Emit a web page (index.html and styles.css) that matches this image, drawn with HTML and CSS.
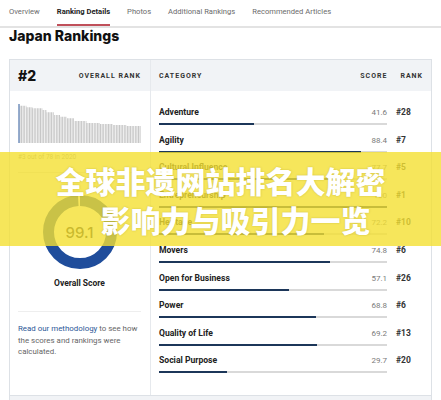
FILE: index.html
```html
<!DOCTYPE html>
<html lang="en">
<head>
    <meta charset="UTF-8">
    <meta name="viewport" content="width=device-width, initial-scale=1.0">
    <title>Japan Rankings</title>
    <link rel="stylesheet" href="styles.css">
</head>
<body>
    <nav class="tabs">
        <a href="#" class="tab">Overview</a>
        <a href="#" class="tab active">Ranking Details</a>
        <a href="#" class="tab">Photos</a>
        <a href="#" class="tab">Additional Rankings</a>
        <a href="#" class="tab">Recommended Articles</a>
    </nav>

    <div class="page">
        <h1 class="title">Japan Rankings</h1>

        <div class="card">
            <div class="overall">
                <div class="card-head">
                    <span class="big-rank">#2</span>
                    <span class="head-label">OVERALL RANK</span>
                </div>
                <div class="overall-body">
                    <svg class="history" viewBox="0 0 123 39" width="123" height="39">
                        <defs>
                            <pattern id="stripes" width="1.58" height="39" patternUnits="userSpaceOnUse">
                                <rect width="1" height="39" fill="#c6c6c6"></rect>
                            </pattern>
                        </defs>
                        <polygon fill="url(#stripes)" points="1.6,1.7 8.5,1.7 8.5,3.3 14.5,3.3 14.5,4.3 24.5,4.3 24.5,6 28.5,6 28.5,8.3 36,8.3 36,11 42,11 42,12.7 49,12.7 49,14.3 56,14.3 56,17 68.5,17 68.5,19 82,19 82,20 95,20 95,21 108.5,21 108.5,22 123,22 123,39 1.6,39"></polygon>
                        <rect x="0.5" y="0" width="1" height="39" fill="#2f5b9c"></rect>
                    </svg>
                    <p class="history-note">#3 out of 78 in 2020</p>

                    <div class="score-ring">
                        <svg viewBox="0 0 74 74" width="74" height="74">
                            <circle cx="37" cy="37" r="31.5" fill="none" stroke="#1f4d9b" stroke-width="11"
                                pathLength="100" stroke-dasharray="99.1 100" transform="rotate(-90 37 37)"></circle>
                        </svg>
                        <span class="ring-value">99.1</span>
                    </div>
                    <p class="ring-label">Overall Score</p>

                    <p class="method"><a href="#">Read our methodology</a> to see how the scores and rankings were calculated.</p>
                </div>
            </div>

            <div class="categories">
                <div class="card-head cat-head">
                    <span class="head-label">CATEGORY</span>
                    <span class="head-label score-col">SCORE</span>
                    <span class="head-label rank-col">RANK</span>
                </div>
                <div class="cat-list">
                    <div class="cat-row">
                        <div class="cat-main">
                            <div class="cat-line"><span class="cat-name">Adventure</span><span class="cat-score">41.6</span></div>
                            <div class="track"><div class="fill" style="width: 41.6%"></div></div>
                        </div>
                        <span class="cat-rank">#28</span>
                    </div>
                    <div class="cat-row">
                        <div class="cat-main">
                            <div class="cat-line"><span class="cat-name">Agility</span><span class="cat-score">88.4</span></div>
                            <div class="track"><div class="fill" style="width: 88.4%"></div></div>
                        </div>
                        <span class="cat-rank">#7</span>
                    </div>
                    <div class="cat-row">
                        <div class="cat-main">
                            <div class="cat-line"><span class="cat-name">Cultural Influence</span><span class="cat-score">77.7</span></div>
                            <div class="track"><div class="fill" style="width: 77.7%"></div></div>
                        </div>
                        <span class="cat-rank">#5</span>
                    </div>
                    <div class="cat-row">
                        <div class="cat-main">
                            <div class="cat-line"><span class="cat-name">Entrepreneurship</span><span class="cat-score">100</span></div>
                            <div class="track"><div class="fill" style="width: 100%"></div></div>
                        </div>
                        <span class="cat-rank">#1</span>
                    </div>
                    <div class="cat-row">
                        <div class="cat-main">
                            <div class="cat-line"><span class="cat-name">Heritage</span><span class="cat-score">72.2</span></div>
                            <div class="track"><div class="fill" style="width: 72.2%"></div></div>
                        </div>
                        <span class="cat-rank">#10</span>
                    </div>
                    <div class="cat-row">
                        <div class="cat-main">
                            <div class="cat-line"><span class="cat-name">Movers</span><span class="cat-score">74.8</span></div>
                            <div class="track"><div class="fill" style="width: 74.8%"></div></div>
                        </div>
                        <span class="cat-rank">#6</span>
                    </div>
                    <div class="cat-row">
                        <div class="cat-main">
                            <div class="cat-line"><span class="cat-name">Open for Business</span><span class="cat-score">57.1</span></div>
                            <div class="track"><div class="fill" style="width: 57.1%"></div></div>
                        </div>
                        <span class="cat-rank">#26</span>
                    </div>
                    <div class="cat-row">
                        <div class="cat-main">
                            <div class="cat-line"><span class="cat-name">Power</span><span class="cat-score">68.8</span></div>
                            <div class="track"><div class="fill" style="width: 68.8%"></div></div>
                        </div>
                        <span class="cat-rank">#6</span>
                    </div>
                    <div class="cat-row">
                        <div class="cat-main">
                            <div class="cat-line"><span class="cat-name">Quality of Life</span><span class="cat-score">69.2</span></div>
                            <div class="track"><div class="fill" style="width: 69.2%"></div></div>
                        </div>
                        <span class="cat-rank">#13</span>
                    </div>
                    <div class="cat-row">
                        <div class="cat-main">
                            <div class="cat-line"><span class="cat-name">Social Purpose</span><span class="cat-score">29.7</span></div>
                            <div class="track"><div class="fill" style="width: 29.7%"></div></div>
                        </div>
                        <span class="cat-rank">#20</span>
                    </div>
                </div>
            </div>

            <div class="card-foot"></div>
        </div>
    </div>

    <div class="banner">
        <p class="banner-line">全球非遗网站排名大解密</p>
        <p class="banner-line second">影响力与吸引力一览</p>
    </div>
</body>
</html>
```

FILE: styles.css
```css
* {
    margin: 0;
    padding: 0;
    box-sizing: border-box;
}

body {
    font-family: Roboto, "Liberation Sans", sans-serif;
    background: white;
    color: #222;
    overflow: hidden;
    height: 400px;
    position: relative;
}

a {
    text-decoration: none;
}

.tabs {
    display: flex;
    gap: 17px;
    padding: 0 9px;
    border-bottom: 2px solid #e3e3e3;
}

.tab {
    font-size: 7.6px;
    line-height: 10px;
    color: #6b6b6b;
    padding: 7px 0 7px;
    border-bottom: 2px solid transparent;
}

.tab.active {
    color: #222;
    font-weight: 700;
    border-bottom-color: #c0505a;
}

.page {
    padding: 0 9px;
}

.title {
    font-family: Inter, "Open Sans", sans-serif;
    font-size: 14px;
    line-height: 15px;
    font-weight: 800;
    color: #111;
    margin-bottom: 16px;
}

.card {
    display: grid;
    grid-template-columns: 141px 1fr;
    border: 1px solid #dde1e6;
    border-bottom: none;
}

.card-head {
    display: flex;
    align-items: center;
    justify-content: space-between;
    height: 31px;
    background: #f1f3f6;
    padding: 0 9px 0 8px;
}

.big-rank {
    font-family: Inter, sans-serif;
    font-size: 14px;
    font-weight: 800;
    color: #111;
}

.head-label {
    font-size: 7px;
    font-weight: 700;
    letter-spacing: 1px;
    color: #333;
}

.overall {
    border-right: 1px solid #e6e9ed;
}

.overall-body {
    display: flex;
    flex-direction: column;
    padding: 13px 9px 0 8px;
}

.history {
    display: block;
}

.history-note {
    font-size: 6.5px;
    line-height: 10px;
    color: #9a9a9a;
    margin-top: 9px;
    padding-bottom: 10px;
    border-bottom: 1px solid #e4e4e4;
}

.score-ring {
    display: grid;
    place-items: center;
    align-self: center;
    margin-top: 22px;
}

.score-ring svg,
.ring-value {
    grid-area: 1 / 1;
}

.ring-value {
    font-family: Inter, sans-serif;
    font-size: 15px;
    font-weight: 500;
    color: #222;
}

.ring-label {
    text-align: center;
    font-size: 8.5px;
    line-height: 12px;
    font-weight: 700;
    margin-top: 8px;
    padding-bottom: 22px;
    border-bottom: 1px solid #eeeeee;
}

.method {
    font-size: 7.9px;
    line-height: 11.5px;
    color: #666;
    margin-top: 11px;
}

.method a {
    color: #2c5897;
}

.cat-head {
    padding: 0 8px 0 8px;
}

.cat-head .score-col {
    margin-left: auto;
}

.cat-head .rank-col {
    margin-left: 13px;
}

.cat-list {
    padding: 15px 8px 13px 8px;
}

.cat-row {
    display: grid;
    grid-template-columns: 1fr 27px;
    column-gap: 9px;
    height: 27.6px;
}

.cat-line {
    display: flex;
    justify-content: space-between;
    align-items: baseline;
    line-height: 12px;
}

.cat-name {
    font-size: 8.6px;
    font-weight: 700;
    color: #222;
}

.cat-score {
    font-size: 8px;
    color: #7a7a7a;
}

.cat-rank {
    font-size: 8.5px;
    line-height: 12px;
    font-weight: 700;
    color: #333;
}

.track {
    height: 2px;
    background: #d9d9d9;
    margin-top: 4px;
}

.fill {
    height: 2px;
    background: #1c3659;
}

.card-foot {
    grid-column: 1 / -1;
    height: 20px;
    background: #f1f3f6;
    border-top: 1px solid #dde1e6;
}

.banner {
    position: absolute;
    top: 152px;
    left: 0;
    right: 0;
    height: 94px;
    padding-top: 9px;
    background: rgba(244, 224, 50, 0.8);
    text-align: center;
}

.banner-line {
    font-family: "Noto Sans CJK SC", sans-serif;
    font-size: 30px;
    line-height: 39px;
    font-weight: 900;
    color: white;
    text-shadow: 0 0 2px rgba(120, 110, 20, 0.35);
}

.banner-line.second {
    padding-left: 30px;
}
```
